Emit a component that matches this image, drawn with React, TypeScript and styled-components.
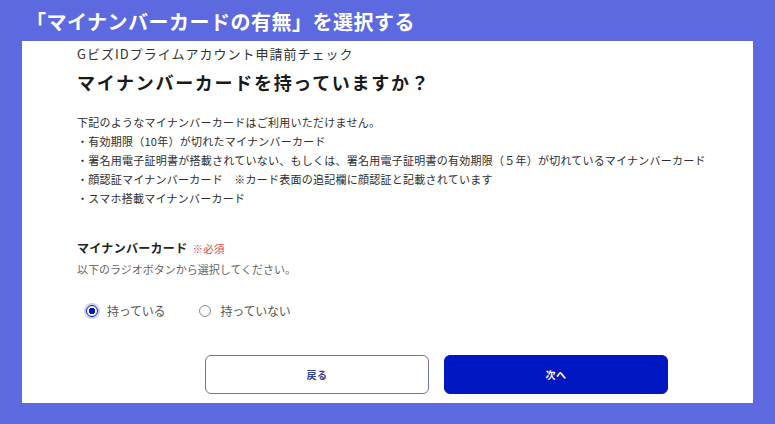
import { useState } from 'react';
import styled, { createGlobalStyle } from 'styled-components';

const GlobalStyle = createGlobalStyle`
  html, body {
    margin: 0;
    padding: 0;
    background: #5d69de;
  }
  * {
    box-sizing: border-box;
  }
`;

const options = [
  { value: 'yes', label: '持っている' },
  { value: 'no', label: '持っていない' },
];

const notes = [
  '・有効期限（10年）が切れたマイナンバーカード',
  '・署名用電子証明書が搭載されていない、もしくは、署名用電子証明書の有効期限（５年）が切れているマイナンバーカード',
  '・顔認証マイナンバーカード　※カード表面の追記欄に顔認証と記載されています',
  '・スマホ搭載マイナンバーカード',
];

const App = () => {
  const [choice, setChoice] = useState('yes');

  return (
    <Page>
      <GlobalStyle />
      <Caption>「マイナンバーカードの有無」を選択する</Caption>

      <Panel>
        <Sub>GビズIDプライムアカウント申請前チェック</Sub>
        <Heading>マイナンバーカードを持っていますか？</Heading>

        <Notes>
          <p>下記のようなマイナンバーカードはご利用いただけません。</p>
          {notes.map((n) => (
            <p key={n}>{n}</p>
          ))}
        </Notes>

        <FieldLabel>
          マイナンバーカード<Required>※必須</Required>
        </FieldLabel>
        <Help>以下のラジオボタンから選択してください。</Help>

        <RadioRow>
          {options.map((o) => (
            <RadioItem key={o.value} onClick={() => setChoice(o.value)}>
              <RadioMark $checked={choice === o.value} />
              {o.label}
            </RadioItem>
          ))}
        </RadioRow>

        <Actions>
          <Button type="button">戻る</Button>
          <Button type="button" $primary>
            次へ
          </Button>
        </Actions>
      </Panel>
    </Page>
  );
};

export default App;

/* ---------------- styled-components ---------------- */

const Page = styled.div`
  width: 775px;
  height: 424px;
  background: #5d69de;
  font-family: 'Noto Sans CJK JP', 'Noto Sans', sans-serif;
  display: flex;
  flex-direction: column;
  overflow: hidden;
`;

const Caption = styled.h1`
  margin: 0;
  height: 41px;
  padding: 2px 0 0 26px;
  font-size: 20px;
  line-height: 39px;
  font-weight: 700;
  letter-spacing: 0.5px;
  color: #fff;
`;

const Panel = styled.main`
  margin: 0 22px;
  height: 362px;
  background: #fff;
  padding: 3px 55px 0;
  display: flex;
  flex-direction: column;
  color: #222;
`;

const Sub = styled.div`
  font-size: 13px;
  line-height: 20px;
  letter-spacing: 1px;
  color: #333;
`;

const Heading = styled.h2`
  margin: 4px 0 0;
  font-size: 18px;
  line-height: 28px;
  font-weight: 700;
  letter-spacing: 1.7px;
  color: #1a1a1a;
`;

const Notes = styled.div`
  margin-top: 17px;
  font-size: 11px;
  line-height: 19px;
  letter-spacing: 0.25px;
  color: #2e2e2e;

  p {
    margin: 0;
    white-space: nowrap;
  }
`;

const FieldLabel = styled.div`
  margin-top: 31px;
  font-size: 12px;
  line-height: 18px;
  font-weight: 700;
  letter-spacing: 0.3px;
  color: #222;
`;

const Required = styled.span`
  margin-left: 5px;
  font-size: 10.5px;
  font-weight: 400;
  color: #e0464f;
`;

const Help = styled.div`
  margin-top: 2px;
  font-size: 11px;
  line-height: 18px;
  color: #666;
`;

const RadioRow = styled.div`
  margin-top: 23px;
  padding-left: 9px;
  height: 20px;
  display: flex;
  align-items: center;
  gap: 34px;
`;

const RadioItem = styled.label`
  display: flex;
  align-items: center;
  gap: 9px;
  font-size: 12px;
  line-height: 20px;
  letter-spacing: -0.2px;
  color: #555;
  cursor: pointer;
`;

const RadioMark = styled.span<{ $checked?: boolean }>`
  width: 12px;
  height: 12px;
  border-radius: 50%;
  border: 1.5px solid ${({ $checked }) => ($checked ? '#0017c1' : '#8a8a8a')};
  background: ${({ $checked }) =>
    $checked ? 'radial-gradient(circle, #0017c1 0 3px, #fff 3.5px)' : '#fff'};
  box-shadow: ${({ $checked }) => ($checked ? '0 0 0 2px #c9cff5' : 'none')};
`;

const Actions = styled.div`
  margin-top: 34px;
  padding-left: 128px;
  display: flex;
  gap: 15px;
`;

const Button = styled.button<{ $primary?: boolean }>`
  width: 224px;
  height: 39px;
  border-radius: 6px;
  font-family: inherit;
  font-size: 10px;
  font-weight: 700;
  letter-spacing: 0.5px;
  cursor: pointer;
  border: 1.5px solid ${({ $primary }) => ($primary ? '#0017c1' : '#70759c')};
  background: ${({ $primary }) => ($primary ? '#0017c1' : '#fff')};
  color: ${({ $primary }) => ($primary ? '#fff' : '#34429a')};
`;
